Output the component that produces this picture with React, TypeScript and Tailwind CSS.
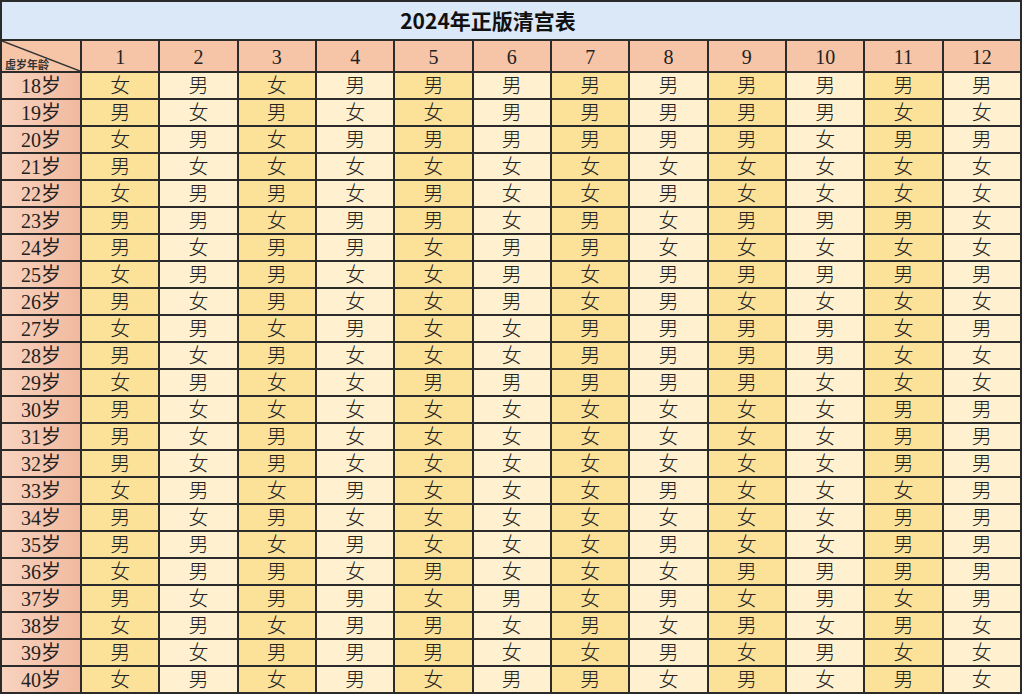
import React from 'react';

// 清宫表: rows = 虚岁年龄 18-40, columns = 月份 1-12
const ROWS: { age: number; cells: string }[] = [
  { age: 18, cells: '女男女男男男男男男男男男' },
  { age: 19, cells: '男女男女女男男男男男女女' },
  { age: 20, cells: '女男女男男男男男男女男男' },
  { age: 21, cells: '男女女女女女女女女女女女' },
  { age: 22, cells: '女男男女男女女男女女女女' },
  { age: 23, cells: '男男女男男女男女男男男女' },
  { age: 24, cells: '男女男男女男男女女女女女' },
  { age: 25, cells: '女男男女女男女男男男男男' },
  { age: 26, cells: '男女男女女男女男女女女女' },
  { age: 27, cells: '女男女男女女男男男男女男' },
  { age: 28, cells: '男女男女女女男男男男女女' },
  { age: 29, cells: '女男女女男男男男男女女女' },
  { age: 30, cells: '男女女女女女女女女女男男' },
  { age: 31, cells: '男女男女女女女女女女男男' },
  { age: 32, cells: '男女男女女女女女女女男男' },
  { age: 33, cells: '女男女男女女女男女女女男' },
  { age: 34, cells: '男女男女女女女女女女男男' },
  { age: 35, cells: '男男女男女女女男女女男男' },
  { age: 36, cells: '女男男女男女女女男男男男' },
  { age: 37, cells: '男女男男女男女男女男女男' },
  { age: 38, cells: '女男女男男女男女男女男女' },
  { age: 39, cells: '男女男男男女女男女男女女' },
  { age: 40, cells: '女男女男女男男女男女男女' },
];

const MONTHS = [1, 2, 3, 4, 5, 6, 7, 8, 9, 10, 11, 12];

const cellFont = { fontFamily: '"Liberation Serif", "Noto Sans CJK SC", serif' };

export default function App() {
  return (
    <div className="w-[1024px] h-[697px] bg-white overflow-hidden">
      <div
        className="w-[1022px] grid grid-cols-[78px_repeat(12,minmax(0,1fr))] gap-[2px] p-[2px] bg-[#2b2b2b] text-[#222]"
        style={cellFont}
      >
        {/* Title */}
        <div
          className="col-span-13 h-[37px] bg-[#dbe8f7] flex items-center justify-center pr-[46px] text-[21px] font-bold text-[#111]"
          style={{ fontFamily: '"Noto Sans CJK SC", "Noto Sans", sans-serif' }}
        >
          2024年正版清宫表
        </div>

        {/* Header row */}
        <div className="relative h-[30px] bg-[#f6c4a7] overflow-hidden">
          <svg className="absolute inset-0 w-full h-full" viewBox="0 0 78 30" preserveAspectRatio="none">
            <line x1="0" y1="0" x2="78" y2="30" stroke="#333" strokeWidth="1.5" />
          </svg>
          <span
            className="absolute left-[3px] bottom-[1px] text-[11px] font-bold leading-none text-[#333]"
            style={{ fontFamily: '"Noto Sans CJK SC", sans-serif' }}
          >
            虚岁年龄
          </span>
        </div>
        {MONTHS.map((m) => (
          <div key={m} className="h-[30px] bg-[#f6c4a7] flex items-center justify-center text-[20px] pt-[2px]">
            {m}
          </div>
        ))}

        {/* Data rows */}
        {ROWS.map((row) => (
          <React.Fragment key={row.age}>
            <div className="h-[25px] bg-linear-to-r from-[#f8d3bf] to-[#f1b99e] flex items-center justify-center text-[20px] leading-none">
              {row.age}岁
            </div>
            {row.cells.split('').map((c, i) => (
              <div
                key={i}
                className={`h-[25px] flex items-center justify-center text-[20px] leading-none font-light ${
                  i % 2 === 0 ? 'bg-[#fce198]' : 'bg-[#fff1cf]'
                }`}
              >
                {c}
              </div>
            ))}
          </React.Fragment>
        ))}
      </div>
    </div>
  );
}
